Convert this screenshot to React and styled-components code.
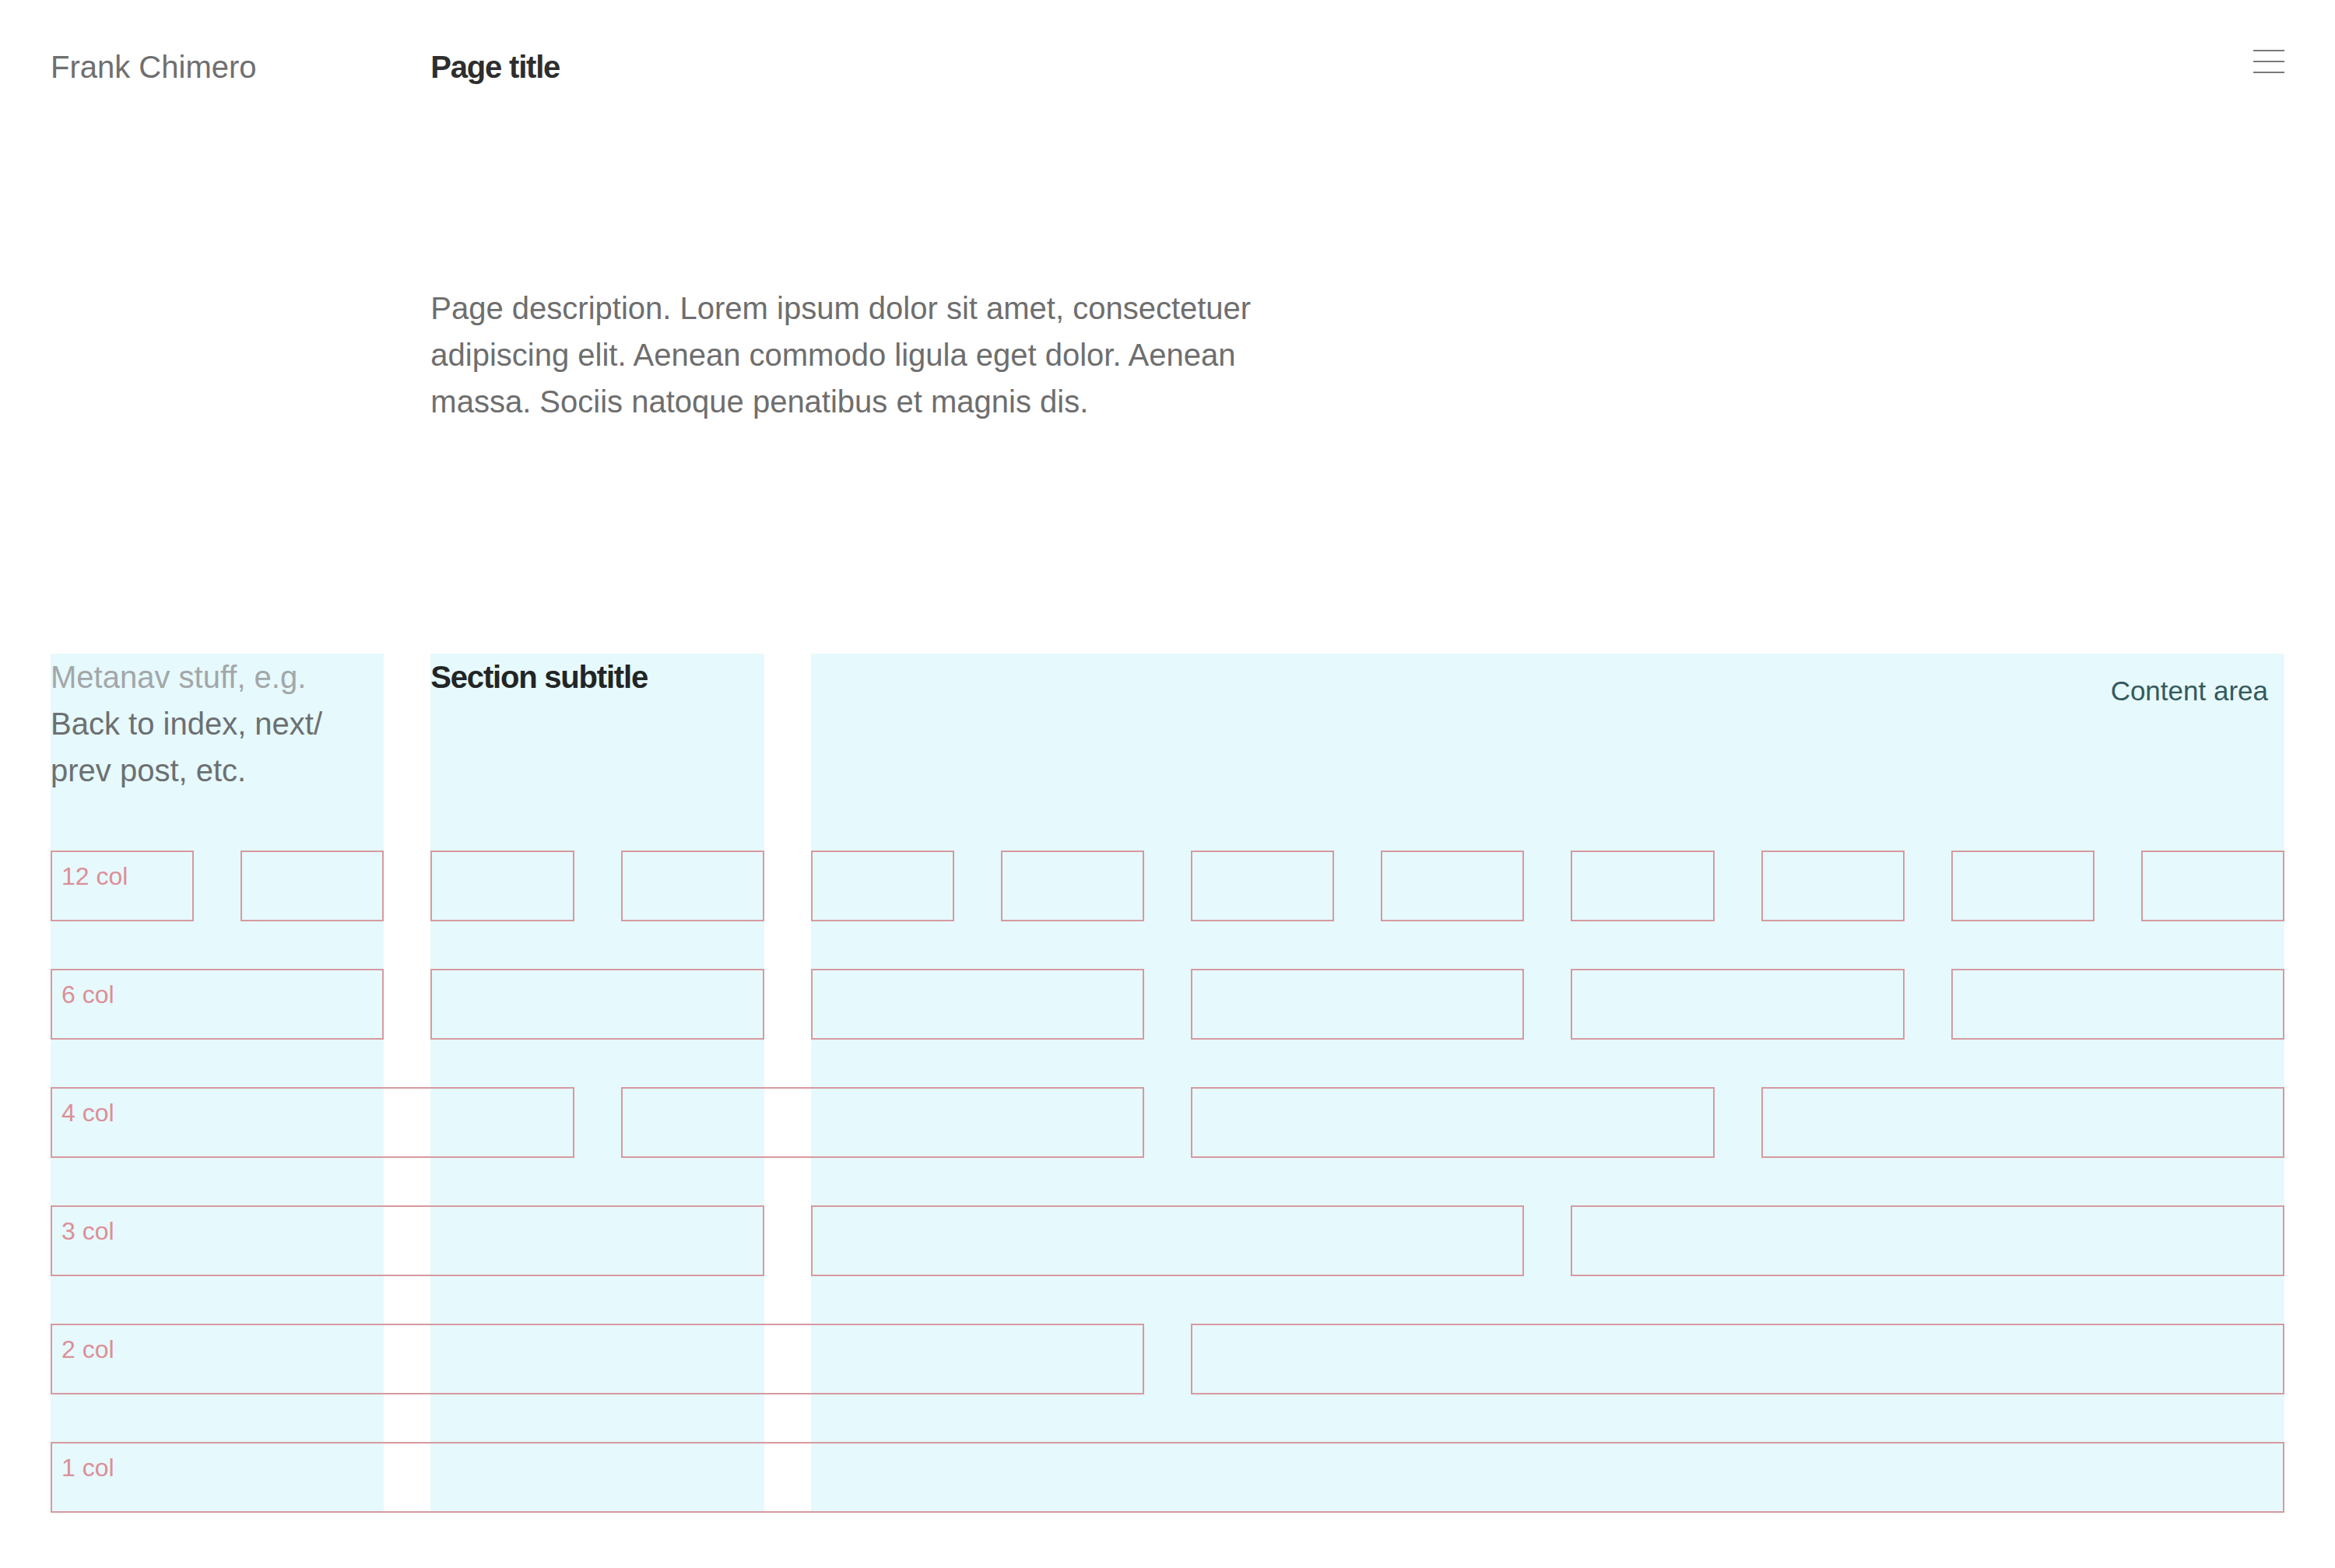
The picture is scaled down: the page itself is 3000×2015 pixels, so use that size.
import React from "react";
import styled, { createGlobalStyle } from "styled-components";

const GlobalStyle = createGlobalStyle`
  html, body {
    margin: 0;
    padding: 0;
    background: #ffffff;
  }
  body {
    font-family: "Liberation Sans", Arial, sans-serif;
    -webkit-font-smoothing: antialiased;
  }
`;

const Page = styled.div`
  padding: 56px 65px 0 65px;
  box-sizing: border-box;
  width: 100%;
`;

const Grid = styled.div`
  display: grid;
  grid-template-columns: repeat(12, 1fr);
  column-gap: 60px;
`;

/* ---------- header ---------- */

const Header = styled(Grid)`
  align-items: start;
`;

const SiteName = styled.div`
  grid-column: 1 / span 2;
  font-size: 40px;
  line-height: 60px;
  color: #6f6f6f;
`;

const PageTitle = styled.h1`
  grid-column: 3 / span 8;
  margin: 0;
  font-size: 40px;
  line-height: 60px;
  font-weight: 700;
  letter-spacing: -1.2px;
  color: #2e2e2e;
`;

const MenuButton = styled.button`
  grid-column: 12;
  justify-self: end;
  margin-top: 8px;
  padding: 0;
  border: none;
  background: none;
  width: 40px;
  height: 30px;
  display: flex;
  flex-direction: column;
  justify-content: space-between;
  cursor: pointer;
`;

const MenuLine = styled.span`
  display: block;
  height: 2px;
  width: 40px;
  background: #7a7a7a;
`;

/* ---------- intro ---------- */

const Intro = styled(Grid)`
  margin-top: 250px;
`;

const Description = styled.p`
  grid-column: 3 / span 5;
  margin: 0;
  font-size: 40px;
  line-height: 60px;
  color: #6e6e6e;
`;

/* ---------- grid demo ---------- */

const Demo = styled(Grid)`
  margin-top: 294px;
  grid-template-rows: 192px repeat(6, 91px);
  row-gap: 61px;
`;

const Column = styled.div`
  grid-column: ${(p) => p.$start} / span ${(p) => p.$span};
  grid-row: 1 / -1;
  background: #e6f9fc;
  font-size: 40px;
  line-height: 60px;
`;

const MetaNav = styled.div`
  color: #6c7072;
`;

const MetaMuted = styled.span`
  color: #a3a7a9;
`;

const Subtitle = styled.h2`
  margin: 0;
  font-size: 40px;
  line-height: 60px;
  font-weight: 700;
  letter-spacing: -1.2px;
  color: #222526;
`;

const ContentLabel = styled.div`
  padding: 22px 21px 0 0;
  text-align: right;
  font-size: 35px;
  line-height: 52px;
  color: #345a5d;
`;

const Row = styled.div`
  grid-column: 1 / -1;
  grid-row: ${(p) => p.$row};
  display: grid;
  grid-template-columns: repeat(12, 1fr);
  column-gap: 60px;
`;

const Cell = styled.div`
  grid-column: span ${(p) => p.$span};
  box-sizing: border-box;
  border: 2px solid #d69aa0;
  padding: 12px;
  font-size: 32px;
  line-height: 38px;
  color: #dc8f97;
`;

const layouts = [
  { count: 12, span: 1 },
  { count: 6, span: 2 },
  { count: 4, span: 3 },
  { count: 3, span: 4 },
  { count: 2, span: 6 },
  { count: 1, span: 12 },
];

export default function App() {
  return (
    <>
      <GlobalStyle />
      <Page>
        <Header>
          <SiteName>Frank Chimero</SiteName>
          <PageTitle>Page title</PageTitle>
          <MenuButton aria-label="Menu">
            <MenuLine />
            <MenuLine />
            <MenuLine />
          </MenuButton>
        </Header>

        <Intro>
          <Description>
            Page description. Lorem ipsum dolor sit amet, consectetuer
            adipiscing elit. Aenean commodo ligula eget dolor. Aenean massa.
            Sociis natoque penatibus et magnis dis.
          </Description>
        </Intro>

        <Demo>
          <Column $start={1} $span={2}>
            <MetaNav>
              <MetaMuted>Metanav stuff, e.g.</MetaMuted>
              <br />
              Back to index, next/ prev post, etc.
            </MetaNav>
          </Column>
          <Column $start={3} $span={2}>
            <Subtitle>Section subtitle</Subtitle>
          </Column>
          <Column $start={5} $span={8}>
            <ContentLabel>Content area</ContentLabel>
          </Column>

          {layouts.map((l, i) => (
            <Row key={l.count} $row={i + 2}>
              {Array.from({ length: l.count }).map((_, j) => (
                <Cell key={j} $span={l.span}>
                  {j === 0 ? `${l.count} col` : null}
                </Cell>
              ))}
            </Row>
          ))}
        </Demo>
      </Page>
    </>
  );
}
